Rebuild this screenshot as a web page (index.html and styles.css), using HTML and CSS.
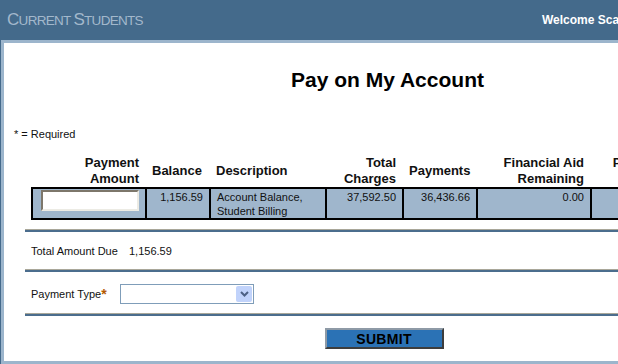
FILE: index.html
```html
<!DOCTYPE html>
<html lang="en">

<head>
    <meta charset="UTF-8">
    <title>Pay on My Account</title>
    <link rel="stylesheet" href="styles.css">
</head>

<body>
    <div class="page">
        <div class="topbar">
            <div class="brand"><span class="big">C</span>URRENT <span class="big">S</span>TUDENTS</div>
            <div class="welcome">Welcome Scarlett Johnson</div>
        </div>

        <div class="panel">
            <h1>Pay on My Account</h1>
            <p class="required">* = Required</p>

            <table class="account">
                <colgroup>
                    <col style="width: 114px">
                    <col style="width: 64px">
                    <col style="width: 116px">
                    <col style="width: 77px">
                    <col style="width: 74px">
                    <col style="width: 114px">
                    <col style="width: 80px">
                </colgroup>
                <tr>
                    <th class="num">Payment<br>Amount</th>
                    <th>Balance</th>
                    <th>Description</th>
                    <th class="num">Total<br>Charges</th>
                    <th>Payments</th>
                    <th class="num">Financial Aid<br>Remaining</th>
                    <th class="num">Pending<br>Aid</th>
                </tr>
                <tr class="row">
                    <td><input type="text" class="amount"></td>
                    <td class="num">1,156.59</td>
                    <td>Account Balance,<br>Student Billing</td>
                    <td class="num">37,592.50</td>
                    <td class="num">36,436.66</td>
                    <td class="num">0.00</td>
                    <td class="num last">0.00</td>
                </tr>
            </table>

            <div class="form">
                <div class="sep"></div>
                <div class="line">
                    <span class="label">Total Amount Due</span>
                    <span>1,156.59</span>
                </div>
                <div class="sep"></div>
                <div class="line type">
                    <span class="label short">Payment Type<b class="star">*</b></span>
                    <div class="picker">
                        <select></select>
                        <span class="arrow">
                            <svg width="9" height="6" viewBox="0 0 9 6"><path d="M1 1 L4.5 4.5 L8 1" fill="none" stroke="#4d6185" stroke-width="2"/></svg>
                        </span>
                    </div>
                </div>
                <div class="sep"></div>
                <div class="actions">
                    <button class="submit">SUBMIT</button>
                </div>
            </div>
        </div>
    </div>
</body>

</html>
```

FILE: styles.css
```css
* {
    margin: 0;
    padding: 0;
    box-sizing: border-box;
}

body {
    background: #446a8b;
    font-family: 'Liberation Sans', Arial, sans-serif;
    font-size: 11px;
    color: #111;
    overflow: hidden;
}

.page {
    width: 774px;
}

.topbar {
    height: 40px;
    display: grid;
    grid-template-columns: 542px 1fr;
    align-items: center;
}

.brand {
    padding-left: 7px;
    color: #a3b8cc;
    font-size: 13.5px;
    letter-spacing: -0.7px;
    white-space: nowrap;
}

.brand .big {
    font-size: 17px;
}

.welcome {
    color: #fff;
    font-weight: bold;
    font-size: 12px;
    white-space: nowrap;
}

.panel {
    margin-left: 1px;
    background: #fff;
    border: 3px solid #9cb5cc;
}

h1 {
    margin-top: 25px;
    font-size: 21px;
    line-height: 24px;
    text-align: center;
    color: #000;
}

.required {
    margin-top: 35px;
    margin-left: 10px;
    line-height: 14px;
}

.account {
    margin-top: 14px;
    margin-left: 27px;
    border-spacing: 0;
    table-layout: fixed;
    width: 639px;
}

.account th {
    font-size: 13px;
    line-height: 16px;
    text-align: left;
    vertical-align: middle;
    padding: 0 6px 0 5px;
    border-left: 2px solid transparent;
    white-space: nowrap;
}

.account th.num {
    text-align: right;
}

.row td {
    background: #9fb6cc;
    border-top: 2px solid #000;
    border-bottom: 2px solid #000;
    border-left: 2px solid #000;
    padding: 1px 6px 0 6px;
    line-height: 14px;
    vertical-align: top;
    white-space: nowrap;
}

.row td.num {
    text-align: right;
}

.row td.last {
    border-right: 2px solid #000;
}

.amount {
    display: block;
    margin-left: 2px;
    width: 98px;
    height: 21px;
    background: #fff;
    border: 2px solid;
    border-color: #7d776b #ecebe4 #ecebe4 #7d776b;
}

.form {
    margin: 9px 28px 0 21px;
}

.sep {
    height: 3px;
    border-top: 1px solid #a9a799;
    background: #4b6d8d;
}

.line {
    display: flex;
    align-items: center;
    padding: 12px 6px 11px;
    line-height: 14px;
}

.line.type {
    padding-bottom: 9px;
}

.label {
    width: 98px;
}

.label.short {
    width: 89px;
}

.star {
    color: #b35a00;
    font-size: 14px;
    vertical-align: top;
}

.picker {
    display: flex;
    width: 134px;
    height: 20px;
    border: 1px solid #7f9db9;
    background: #fff;
}

.picker select {
    flex: 1;
    border: none;
    appearance: none;
    background: #fff;
}

.arrow {
    width: 16px;
    height: 16px;
    margin: 1px;
    background: #c1d3fb;
    border-radius: 2px;
    display: flex;
    align-items: center;
    justify-content: center;
}

.actions {
    display: flex;
    justify-content: center;
    padding: 12px 0;
}

.submit {
    width: 119px;
    height: 21px;
    background: #2b72b5;
    border: 2px solid;
    border-color: #8e9aa6 #3d3d3d #3d3d3d #8e9aa6;
    font-family: 'Liberation Sans', Arial, sans-serif;
    font-weight: bold;
    font-size: 14px;
    color: #000;
    letter-spacing: 0.3px;
}
```
